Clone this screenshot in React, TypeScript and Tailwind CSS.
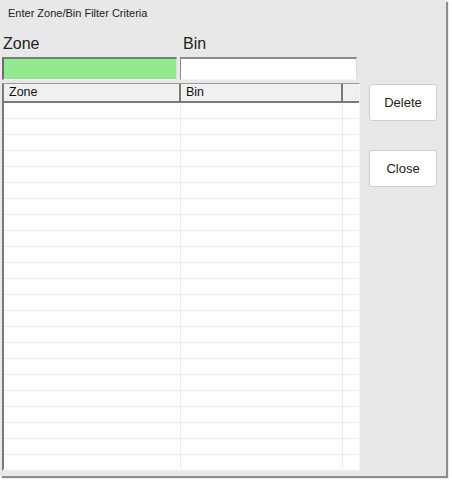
import React from "react";

const font = { fontFamily: '"Liberation Sans", Arial, sans-serif' };

function Button({ label }: { label: string }) {
  return (
    <button className="flex h-[37px] w-[68px] items-center justify-center rounded-[3px] border border-[#cfcfcf] bg-white text-[13px] text-[#222]">
      {label}
    </button>
  );
}

export default function App() {
  const rows = Array.from({ length: 23 });

  return (
    <div className="h-[482px] w-[452px] bg-white" style={font}>
      <div className="relative h-[476px] w-[446px] bg-[#e8e8e8] shadow-[2px_2px_1px_rgba(0,0,0,0.45)]">
        <div className="pl-[8px] pt-[6px] text-[11px] leading-[14px] text-[#222]">
          Enter Zone/Bin Filter Criteria
        </div>

        <div className="flex">
          <div className="ml-[2px] w-[358px]">
            <div className="mt-[13px] flex text-[16px] leading-[22px] text-[#222]">
              <span className="w-[180px] pl-[1px]">Zone</span>
              <span className="pl-[1px]">Bin</span>
            </div>

            <div className="mt-[2px] flex gap-[3px]">
              <div className="h-[23px] w-[175px] border-l-2 border-t-2 border-r border-b border-l-[#6e6e6e] border-t-[#7a7a7a] border-r-[#dcdcdc] border-b-[#f4f4f4] bg-[#92e98f]" />
              <div className="h-[23px] w-[177px] border-l border-t-2 border-r border-b border-l-[#888] border-t-[#8a8a8a] border-r-[#dcdcdc] border-b-[#f4f4f4] bg-white" />
            </div>

            <div className="mt-[3px] h-[388px] overflow-hidden border-l-2 border-t border-r border-b-2 border-l-[#7a7a7a] border-t-[#9a9a9a] border-r-[#f4f4f4] border-b-[#f4f4f4] bg-white">
              <div className="flex h-[19px] border-b-2 border-[#7a7a7a] bg-[#f0f0f0] text-[12.5px] leading-[17px] text-[#111]">
                <div className="w-[177px] border-r-2 border-[#7a7a7a] pl-[5px]">Zone</div>
                <div className="w-[162px] border-r-2 border-[#7a7a7a] pl-[5px]">Bin</div>
                <div className="flex-1" />
              </div>
              {rows.map((_, i) => (
                <div key={i} className="flex h-[16px] border-b border-[#ececec]">
                  <div className="w-[177px] border-r border-[#ececec]" />
                  <div className="w-[162px] border-r border-[#ececec]" />
                  <div className="flex-1" />
                </div>
              ))}
            </div>
          </div>

          <div className="ml-[9px] mt-[64px] flex flex-col gap-[29px]">
            <Button label="Delete" />
            <Button label="Close" />
          </div>
        </div>
      </div>
    </div>
  );
}
